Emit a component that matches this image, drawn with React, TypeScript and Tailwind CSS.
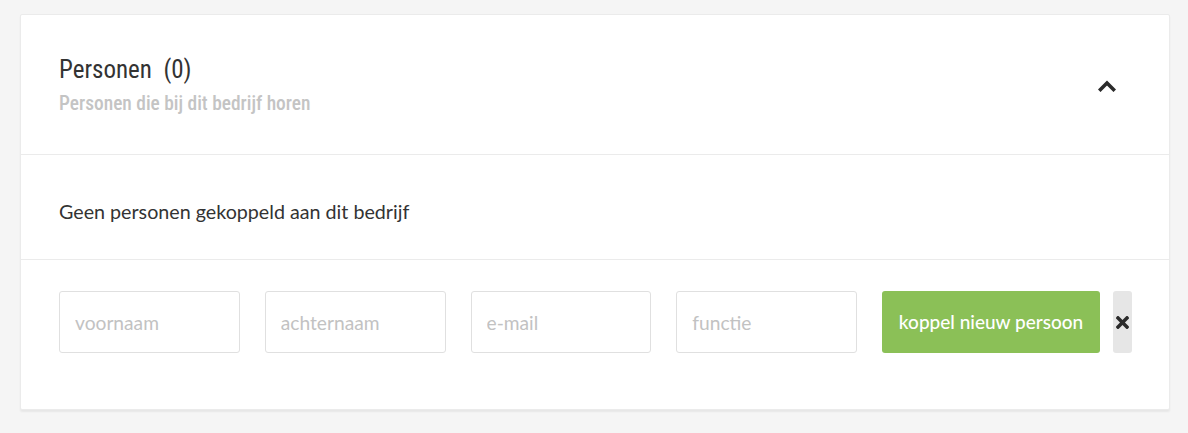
import { FaTimes } from "react-icons/fa";

const fields = ["voornaam", "achternaam", "e-mail", "functie"];

export default function App() {
  return (
    <div className="min-h-[433px] w-full bg-[#f5f5f5] pt-[14px] pl-[20px] pr-[18px] pb-[22px]">
      <div className="bg-white border border-[#ebebeb] rounded-[2px] shadow-[0_2px_2px_rgba(0,0,0,0.06)]">
        <Header />
        <div className="h-[105px] border-b border-[#ebebeb] pl-[38px] flex items-center pt-[9px]">
          <p className="font-['Lato',sans-serif] text-[19.7px] text-[#333]">
            Geen personen gekoppeld aan dit bedrijf
          </p>
        </div>
        <div className="pl-[38px] pt-[31px] pb-[56px] flex flex-row items-center">
          {fields.map((f) => (
            <input
              key={f}
              placeholder={f}
              className="w-[180.75px] h-[62px] mr-[25px] border border-[#e0e0e0] rounded-[3px] px-[15px] font-['Lato',sans-serif] text-[19.2px] text-[#333] placeholder:text-[#c2c2c2] outline-none"
            />
          ))}
          <button className="w-[218px] h-[62px] bg-[#8bc057] rounded-[3px] text-white font-['Lato',sans-serif] text-[19px] font-medium cursor-pointer">
            koppel nieuw persoon
          </button>
          <button className="ml-[13px] w-[19px] h-[62px] bg-[#e6e6e6] rounded-[3px] flex justify-center items-center text-[#2b2b2b] cursor-pointer">
            <FaTimes size={19} />
          </button>
        </div>
      </div>
    </div>
  );
}

const Header = () => {
  return (
    <div className="h-[140px] border-b border-[#ebebeb] pl-[38px] pr-[53px] flex flex-row items-center justify-between">
      <div className="pt-[1px]">
        <p className="font-['Roboto',sans-serif] font-stretch-condensed text-[25px] leading-[30px] text-[#333]">
          Personen&nbsp;&nbsp;(0)
        </p>
        <p className="font-['Roboto',sans-serif] font-stretch-condensed font-medium text-[19.4px] leading-[24px] text-[#c4c4c4] mt-[7px]">
          Personen die bij dit bedrijf horen
        </p>
      </div>
      {/* chevron up */}
      <svg width="18" height="12" viewBox="0 0 18 12" className="mt-[3px]">
        <polyline
          points="2.5,9.5 9,3 15.5,9.5"
          fill="none"
          stroke="#2b2b2b"
          strokeWidth="3.6"
          strokeLinecap="square"
          strokeLinejoin="miter"
        />
      </svg>
    </div>
  );
}
